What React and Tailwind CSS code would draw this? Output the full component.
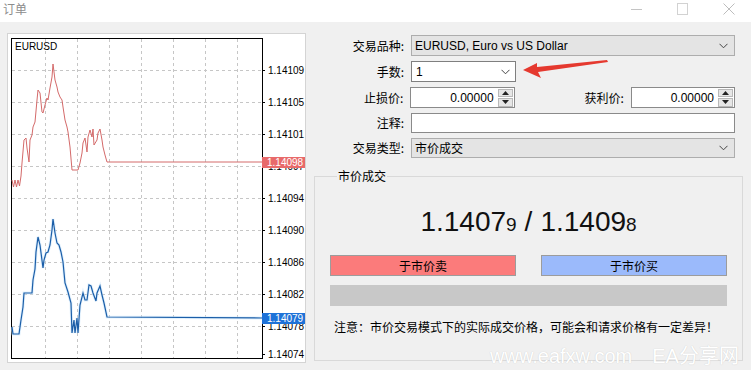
import React from 'react';

const cjk = { fontFamily: '"Microsoft YaHei", "Noto Sans CJK SC", "Noto Sans", sans-serif' };
const latin = { fontFamily: '"Liberation Sans", "Noto Sans CJK SC", sans-serif' };

const redPts = [
  [12, 180], [13.5, 187], [15, 180], [16.5, 187], [18, 180], [19.5, 186], [21, 176], [22, 163], [24, 140],
  [26, 138], [27, 148], [29, 162], [30, 140], [32, 135], [33, 127], [35, 122], [37, 100], [38, 90], [40, 93],
  [42, 112], [43, 113], [45, 105], [47, 98], [48, 100], [50, 88], [52, 77], [53, 64], [55, 80], [57, 87],
  [58, 92], [60, 97], [62, 100], [63, 107], [65, 120], [67, 127], [68, 132], [70, 147], [72, 170], [78, 170],
  [80, 163], [82, 153], [83, 143], [85, 138], [87, 152], [88, 137], [90, 130], [92, 137], [93, 129], [94, 145],
  [97, 140], [98, 133], [100, 129], [102, 140], [103, 147], [105, 155], [107, 162], [262, 162],
];

const bluePts = [
  [12, 327], [13, 334], [19, 334], [21, 320], [23, 307], [24, 293], [32, 293], [33, 280], [35, 269], [36, 252],
  [38, 237], [40, 245], [43, 268], [44, 260], [46, 253], [48, 252], [50, 245], [52, 230], [53, 219], [55, 233],
  [57, 243], [59, 245], [61, 252], [63, 262], [65, 283], [68, 292], [71, 303], [72, 333], [74, 320], [75, 333],
  [77, 318], [78, 333], [80, 305], [83, 293], [85, 300], [87, 300], [89, 285], [91, 286], [93, 293], [96, 301],
  [97, 293], [100, 286], [102, 295], [104, 303], [107, 317], [262, 318],
];

const levels = [
  ['1.14109', 70], ['1.14105', 102], ['1.14101', 134], ['1.14097', 166], ['1.14094', 198],
  ['1.14090', 230], ['1.14086', 262], ['1.14082', 294], ['1.14078', 326], ['1.14074', 354],
];

const toPath = (pts) => pts.map((p, i) => `${i ? 'L' : 'M'}${p[0]} ${p[1]}`).join(' ');

const Chart = () => (
  <svg width="294" height="322" viewBox="11 38 294 322" style={latin}>
    <rect x="11" y="38" width="294" height="322" fill="#fff" />
    {[45, 77, 109, 141, 173, 205, 237].map((x) => (
      <line key={x} x1={x + 0.5} y1="39" x2={x + 0.5} y2="358" stroke="#c6c6c6" strokeDasharray="3 3" />
    ))}
    {levels.slice(0, 9).map(([, y]) => (
      <line key={y} x1="12" y1={y + 0.5} x2="262" y2={y + 0.5} stroke="#c6c6c6" strokeDasharray="3 3" />
    ))}
    <rect x="11.5" y="38.5" width="251" height="320" fill="none" stroke="#000" />
    {levels.map(([t, y]) => (
      <g key={t}>
        <line x1="262" y1={y + 0.5} x2="265" y2={y + 0.5} stroke="#000" />
        <text x="268" y={y + 4} fontSize="10" fill="#000">{t}</text>
      </g>
    ))}
    <text x="15" y="50" fontSize="10" fill="#000">EURUSD</text>
    <path d={toPath(redPts)} fill="none" stroke="#d46a6a" strokeWidth="1" />
    <path d={toPath(bluePts)} fill="none" stroke="#cfe8fb" strokeWidth="3" opacity="0.6" />
    <path d={toPath(bluePts)} fill="none" stroke="#1b5ea8" strokeWidth="1.2" />
    <rect x="262" y="157" width="43" height="11" fill="#e86a6a" />
    <text x="267" y="166" fontSize="10" fill="#fff">1.14098</text>
    <rect x="262" y="313" width="43" height="11" fill="#1e72d8" />
    <text x="267" y="322" fontSize="10" fill="#fff">1.14079</text>
  </svg>
);

const Chevron = () => (
  <svg width="9" height="6" viewBox="0 0 9 6" className="shrink-0">
    <path d="M0.5 0.8 L4.5 4.8 L8.5 0.8" fill="none" stroke="#444" strokeWidth="1" />
  </svg>
);

const Spinner = () => (
  <div className="flex flex-col w-[15px] h-[18px] gap-[1px] mr-[1px]">
    <div className="flex-1 bg-[#e6e6e6] border border-[#b8b8b8] flex items-center justify-center">
      <svg width="7" height="4" viewBox="0 0 7 4"><path d="M3.5 0 L7 4 L0 4 Z" fill="#222" /></svg>
    </div>
    <div className="flex-1 bg-[#e6e6e6] border border-[#b8b8b8] flex items-center justify-center">
      <svg width="7" height="4" viewBox="0 0 7 4"><path d="M0 0 L7 0 L3.5 4 Z" fill="#222" /></svg>
    </div>
  </div>
);

const Label = ({ children, className = 'w-[91px]' }) => (
  <div className={`${className} text-right text-[12px] text-black leading-[20px] pr-[1px]`} style={cjk}>
    {children}
  </div>
);

const PriceInput = ({ w }) => (
  <div className={`${w} h-[21px] bg-white border border-[#8a8a8a] flex items-center justify-end`}>
    <span className="text-[12px] text-black mr-[4px]" style={latin}>0.00000</span>
    <Spinner />
  </div>
);

export default function App() {
  return (
    <div className="relative w-[751px] h-[370px] overflow-hidden bg-[#f0f0f0]">
      {/* title bar */}
      <div className="h-[22px] bg-white flex items-start justify-between">
        <span className="text-[12px] leading-[18px] text-[#8c8c8c] ml-[3px]" style={cjk}>订单</span>
        <div className="flex items-start gap-[35px] mr-[16px] mt-[3px]">
          <svg width="11" height="12" viewBox="0 0 11 12"><line x1="0" y1="6.5" x2="11" y2="6.5" stroke="#c4c4c4" /></svg>
          <svg width="11" height="12" viewBox="0 0 11 12"><rect x="0.5" y="0.5" width="10" height="11" fill="none" stroke="#d2d2d2" /></svg>
          <svg width="12" height="12" viewBox="0 0 12 12"><path d="M0.5 0.5 L11.5 11.5 M11.5 0.5 L0.5 11.5" stroke="#bdbdbd" /></svg>
        </div>
      </div>

      <div className="flex pt-[11px] pl-[7px]">
        {/* chart panel */}
        <div className="w-[299px] h-[330px] bg-white border border-[#d4d4d4] pt-[4px] pl-[3px] overflow-hidden">
          <Chart />
        </div>

        {/* order form */}
        <div className="ml-[8px] w-[429px] flex flex-col">
          <div className="flex flex-col gap-[5px] mt-[2px] w-[421px]">
            <div className="flex items-center gap-[6px]">
              <Label>交易品种:</Label>
              <div className="flex-1 h-[21px] bg-[#e4e4e4] border border-[#adadad] flex items-center justify-between pl-[3px] pr-[6px]">
                <span className="text-[12px] text-black" style={latin}>EURUSD, Euro vs US Dollar</span>
                <Chevron />
              </div>
            </div>
            <div className="flex items-center gap-[6px]">
              <Label>手数:</Label>
              <div className="w-[105px] h-[21px] bg-white border border-[#7f7f7f] flex items-center justify-between pl-[4px] pr-[5px]">
                <span className="text-[12px] text-black" style={latin}>1</span>
                <Chevron />
              </div>
            </div>
            <div className="flex items-center gap-[6px]">
              <Label>止损价:</Label>
              <PriceInput w="w-[105px]" />
              <Label className="w-[105px]">获利价:</Label>
              <PriceInput w="w-[105px]" />
            </div>
            <div className="flex items-center gap-[6px]">
              <Label>注释:</Label>
              <div className="flex-1 h-[20px] bg-white border border-[#8a8a8a]" />
            </div>
            <div className="flex items-center gap-[6px]">
              <Label>交易类型:</Label>
              <div className="flex-1 h-[20px] bg-[#e4e4e4] border border-[#adadad] flex items-center justify-between pl-[3px] pr-[6px]">
                <span className="text-[12px] text-black" style={cjk}>市价成交</span>
                <Chevron />
              </div>
            </div>
          </div>

          {/* market execution group */}
          <fieldset className="mt-[10px] h-[193px] border border-[#d9d9d9] px-[15px] flex flex-col">
            <legend className="ml-[7px] px-[1px] text-[12px] leading-[16px] text-black" style={cjk}>市价成交</legend>
            <div className="mt-[23px] h-[30px] flex items-center justify-center text-[28px] text-[#111] leading-[30px]" style={latin}>
              <span>1.1407</span>
              <span className="text-[19px] self-end leading-[25px]">9</span>
              <span className="mx-[8px]">/</span>
              <span>1.1409</span>
              <span className="text-[19px] self-end leading-[25px]">8</span>
            </div>
            <div className="mt-[18px] flex justify-between">
              <button className="w-[186px] h-[21px] bg-[#fb7b7b] border border-[#9c9c9c] text-[12px] text-black leading-[19px]" style={cjk}>于市价卖</button>
              <button className="w-[186px] h-[21px] bg-[#9bbafb] border border-[#9c9c9c] text-[12px] text-black leading-[19px]" style={cjk}>于市价买</button>
            </div>
            <div className="mt-[9px] h-[21px] bg-[#c8c8c8]" />
            <div className="mt-[13px] pl-[4px] text-[12px] leading-[16px] text-black" style={cjk}>
              注意：市价交易模式下的实际成交价格，可能会和请求价格有一定差异！
            </div>
          </fieldset>
        </div>
      </div>

      {/* red annotation arrow */}
      <svg className="absolute left-[520px] top-[56px]" width="92" height="26" viewBox="520 56 92 26">
        <path d="M523 70 L537 63 L537 67 L607 60 L608 62 L538 72 L541 78 Z" fill="#e5392f" />
      </svg>

      {/* watermark */}
      <div
        className="absolute left-[490px] top-[343px] text-[20px] leading-[24px] text-white whitespace-nowrap"
        style={{ ...latin, textShadow: '0 0 1px #c4c4c4' }}
      >
        www.eafxw.com<span className="ml-[20px]">EA</span><span style={cjk}>分享网</span>
      </div>
    </div>
  );
}
